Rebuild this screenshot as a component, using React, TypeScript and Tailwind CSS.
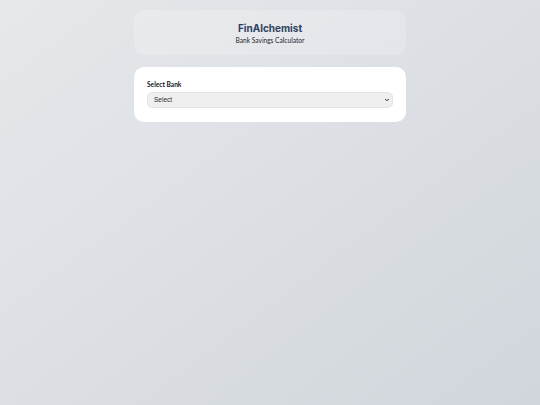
import { useState } from "react";
import { ChevronDown } from "lucide-react";

const banks = ["Select", "HDFC Bank", "ICICI Bank", "State Bank of India", "Axis Bank"];

export default function App() {
  const [bank, setBank] = useState("Select");

  return (
    <div
      className="min-h-screen w-full bg-gradient-to-br from-[#e6e8eb] to-[#d1d6dc] pt-[10px]"
      style={{ fontFamily: 'Lato, "Noto Sans", sans-serif' }}
    >
      <div className="mx-auto flex w-[272px] flex-col gap-[12px]">
        {/* Header */}
        <div className="flex h-[45px] flex-col items-center justify-center rounded-[10px] bg-white/20 pt-[2px]">
          <h1
            className="text-[10px] font-bold leading-[13px] text-[#2d4160]"
            style={{ fontFamily: "Inter, sans-serif" }}
          >
            FinAlchemist
          </h1>
          <p className="text-[6.6px] leading-[10px] text-[#22262c]">Bank Savings Calculator</p>
        </div>

        {/* Bank selector */}
        <div className="flex h-[55px] flex-col rounded-[10px] bg-white px-[13px] pt-[13px]">
          <div className="h-[9px] text-[6.6px] font-bold leading-[9px] text-[#111317]">Select Bank</div>
          <div className="relative mt-[3px] h-[16px]">
            <select
              value={bank}
              onChange={(e) => setBank(e.target.value)}
              className="block h-[16px] w-full appearance-none rounded-[5px] border border-[#e4e4e4] bg-[#efefef] px-[6px] text-[6.5px] leading-[14px] text-[#2b2b2b] outline-none"
              style={{ fontFamily: '"Liberation Sans", Arial, sans-serif' }}
            >
              {banks.map((b) => (
                <option key={b} value={b}>
                  {b}
                </option>
              ))}
            </select>
            <ChevronDown
              className="pointer-events-none absolute right-[3px] top-[5px] h-[6px] w-[6px] text-[#222]"
              strokeWidth={4}
            />
          </div>
        </div>
      </div>
    </div>
  );
}
